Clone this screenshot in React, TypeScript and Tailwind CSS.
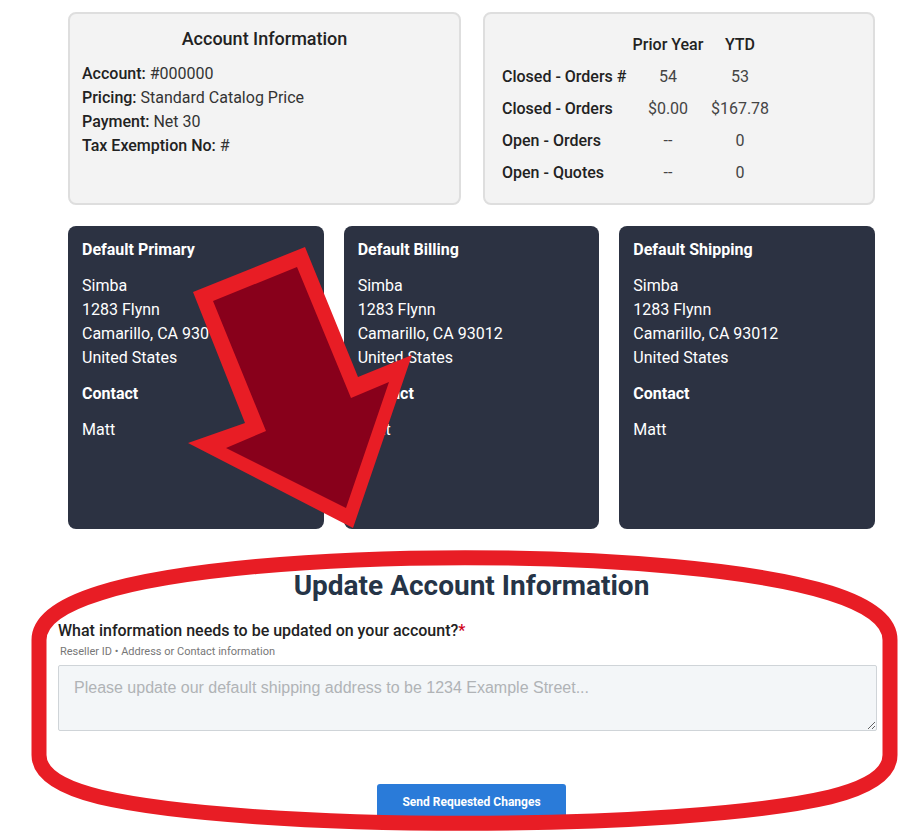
import React from 'react';

const font = { fontFamily: 'Roboto, "Noto Sans", sans-serif' };

const addressCards = [
  { title: 'Default Primary', lines: ['Simba', '1283 Flynn', 'Camarillo, CA 93012', 'United States'], contact: 'Matt' },
  { title: 'Default Billing', lines: ['Simba', '1283 Flynn', 'Camarillo, CA 93012', 'United States'], contact: 'Matt' },
  { title: 'Default Shipping', lines: ['Simba', '1283 Flynn', 'Camarillo, CA 93012', 'United States'], contact: 'Matt' },
];

const stats = [
  { label: 'Closed - Orders #', prior: '54', ytd: '53' },
  { label: 'Closed - Orders', prior: '$0.00', ytd: '$167.78' },
  { label: 'Open - Orders', prior: '--', ytd: '0' },
  { label: 'Open - Quotes', prior: '--', ytd: '0' },
];

function AccountInfo() {
  return (
    <div className="h-[193px] rounded-lg border-2 border-[#dedede] bg-[#f3f3f3] px-[12px] pt-[13px]">
      <h2 className="text-center text-[18px] leading-[24px] font-medium text-[#222]">Account Information</h2>
      <div className="mt-[11px] text-[16px] leading-[24px] text-[#333]">
        <p><span className="font-medium text-[#222]">Account:</span> #000000</p>
        <p><span className="font-medium text-[#222]">Pricing:</span> Standard Catalog Price</p>
        <p><span className="font-medium text-[#222]">Payment:</span> Net 30</p>
        <p><span className="font-medium text-[#222]">Tax Exemption No:</span> #</p>
      </div>
    </div>
  );
}

function StatsBox() {
  return (
    <div className="h-[193px] rounded-lg border-2 border-[#dedede] bg-[#f3f3f3] pl-[17px] pt-[15px] text-[16px] text-[#222]">
      <div className="grid grid-cols-[130px_72px_72px] auto-rows-[32px] items-center">
        <div />
        <div className="text-center font-medium">Prior Year</div>
        <div className="text-center font-medium">YTD</div>
        {stats.map((s) => (
          <React.Fragment key={s.label}>
            <div className="font-medium whitespace-nowrap">{s.label}</div>
            <div className="text-center text-[#444]">{s.prior}</div>
            <div className="text-center text-[#444]">{s.ytd}</div>
          </React.Fragment>
        ))}
      </div>
    </div>
  );
}

function AddressCard({ title, lines, contact }: { title: string; lines: string[]; contact: string }) {
  return (
    <div className="h-[303px] rounded-lg bg-[#2c3242] px-[14px] pt-[12px] text-[16px] leading-[24px] text-white">
      <h3 className="font-bold">{title}</h3>
      <div className="mt-[12px]">
        {lines.map((l) => (
          <p key={l}>{l}</p>
        ))}
      </div>
      <h3 className="mt-[12px] font-bold">Contact</h3>
      <p className="mt-[12px]">{contact}</p>
    </div>
  );
}

function Annotations() {
  return (
    <svg className="pointer-events-none absolute left-0 top-0" width="923" height="833" viewBox="0 0 923 833">
      <polygon points="193,292 305,247 358,377 412,355 353,528 188,443 245,423" fill="#e81d25" />
      <polygon points="213,301 297,267 351,398 389,382 346,508 226,448 266,431" fill="#88001b" />
      <path
        d="M 39 640 L 39 755 Q 39 782 100 797 C 250 832, 680 832, 830 797 Q 890 782 890 755 L 890 640 Q 890 612 830 593 C 680 546, 250 546, 100 593 Q 39 612 39 640 Z"
        fill="none"
        stroke="#e81d25"
        strokeWidth="15"
      />
    </svg>
  );
}

export default function App() {
  return (
    <div className="relative h-[833px] w-[923px] overflow-hidden bg-white" style={font}>
      <div className="ml-[68px] w-[807px] pt-[12px]">
        <div className="grid grid-cols-[393px_392px] gap-[22px]">
          <AccountInfo />
          <StatsBox />
        </div>
        <div className="mt-[21px] grid grid-cols-3 gap-[20px]">
          {addressCards.map((c) => (
            <AddressCard key={c.title} {...c} />
          ))}
        </div>
      </div>

      <div className="ml-[58px] w-[819px]">
        <h1 className="mt-[40px] pl-[8px] text-center text-[28px] leading-[34px] font-bold text-[#253447]">Update Account Information</h1>
        <p className="mt-[18px] text-[16px] leading-[20px] font-medium text-[#222]">
          What information needs to be updated on your account?<span className="text-[#d0021b]">*</span>
        </p>
        <p className="mt-[4px] pl-[2px] text-[11px] leading-[14px] text-[#777]">Reseller ID • Address or Contact information</p>
        <textarea
          className="mt-[6px] block h-[66px] w-full rounded-[2px] border border-[#cfd4d8] bg-[#f3f6f8] px-[15px] py-[10px] text-[16px] placeholder:text-[#b0b3b6]"
          style={{ fontFamily: '"Liberation Sans", Arial, sans-serif' }}
          placeholder="Please update our default shipping address to be 1234 Example Street..."
        />
        <div className="mt-[53px] flex justify-center pl-[8px]">
          <button className="h-[36px] w-[189px] rounded-[3px] bg-[#2a7bd9] text-[12px] font-bold text-white">Send Requested Changes</button>
        </div>
      </div>

      <Annotations />
    </div>
  );
}
